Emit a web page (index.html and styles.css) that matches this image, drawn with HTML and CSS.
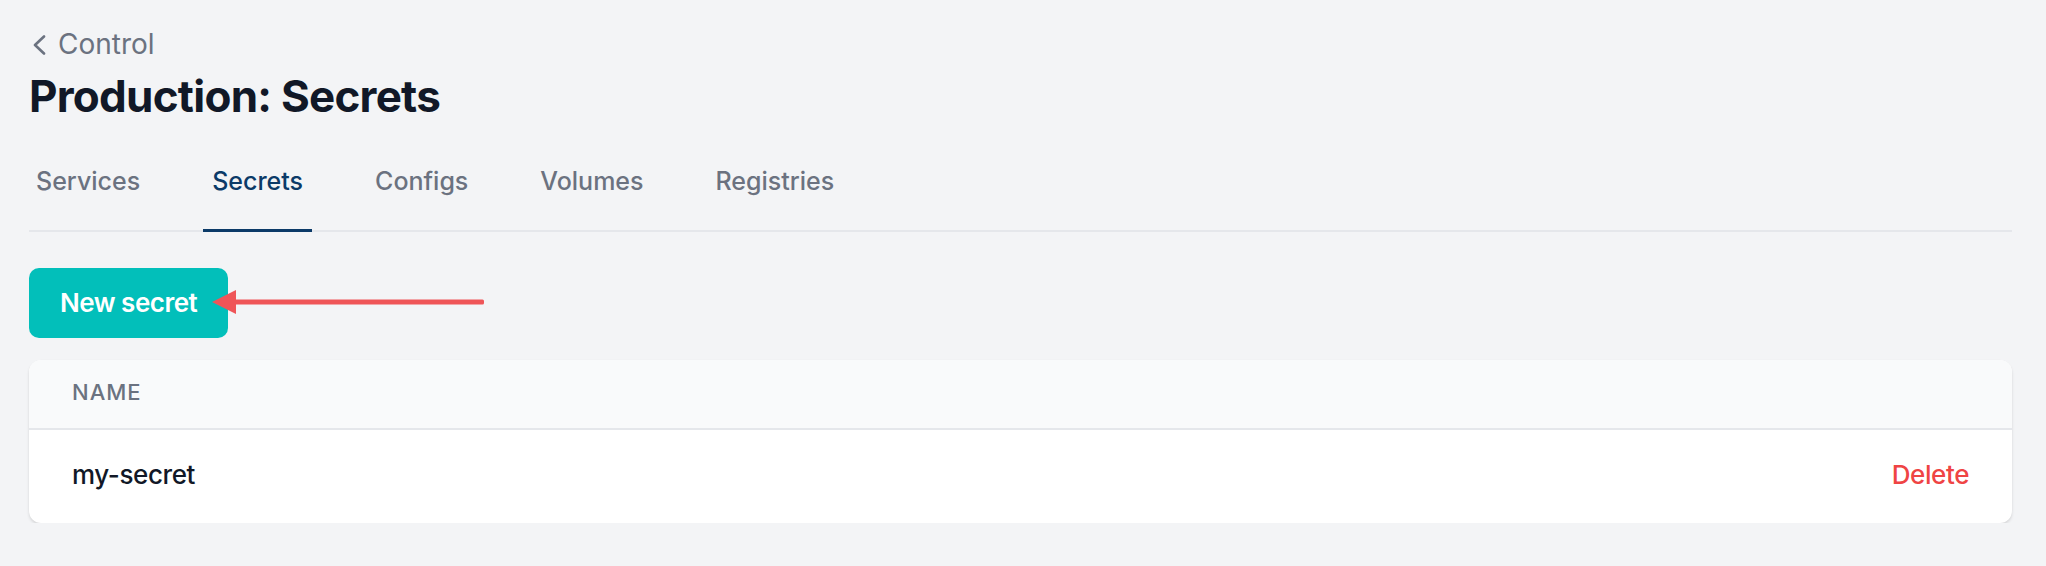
FILE: index.html
```html
<!DOCTYPE html>
<html lang="en">
<head>
<meta charset="utf-8">
<title>Production: Secrets</title>
<link rel="stylesheet" href="styles.css">
</head>
<body>
<main class="page">
  <a class="back" href="#">
    <svg class="back-icon" width="14" height="20" viewBox="0 0 14 20" aria-hidden="true">
      <polyline points="12,1.5 3,10 12,18.5" fill="none" stroke="#6b7280" stroke-width="2.6" stroke-linecap="round" stroke-linejoin="round"/>
    </svg>
    <span>Control</span>
  </a>
  <h1 class="title">Production: Secrets</h1>

  <nav class="tabs">
    <a class="tab" href="#">Services</a>
    <a class="tab active" href="#">Secrets</a>
    <a class="tab" href="#">Configs</a>
    <a class="tab" href="#">Volumes</a>
    <a class="tab" href="#">Registries</a>
  </nav>

  <div class="actions">
    <button class="btn-primary" type="button">New secret</button>
    <svg class="annotation-arrow" width="274" height="26" viewBox="0 0 274 26" aria-hidden="true">
      <rect x="22" y="10.5" width="250" height="5" rx="1.5" fill="#ef5558"/>
      <polygon points="0,13 24,1 24,25" fill="#ef5558"/>
    </svg>
  </div>

  <section class="card">
    <div class="card-head">Name</div>
    <div class="card-row">
      <span class="row-name">my-secret</span>
      <a class="row-delete" href="#">Delete</a>
    </div>
  </section>
</main>
</body>
</html>
```

FILE: styles.css
```css
* {
  box-sizing: border-box;
}

html, body {
  margin: 0;
  padding: 0;
  background: #f3f4f6;
}

body {
  font-family: "Inter", "Noto Sans", "Liberation Sans", sans-serif;
  color: #111827;
}

.page {
  padding: 24px 34px 0 29px;
}

.back {
  display: flex;
  align-items: center;
  gap: 12px;
  height: 40px;
  font-size: 28px;
  line-height: 40px;
  color: #6b7280;
  text-decoration: none;
  width: max-content;
}

.back-icon {
  margin-left: 3px;
  margin-top: 1px;
}

.title {
  margin: 6px 0 0 0;
  font-size: 44px;
  line-height: 52px;
  font-weight: 700;
  letter-spacing: -0.75px;
  color: #111827;
}

.tabs {
  display: flex;
  gap: 54px;
  margin-top: 43px;
  border-bottom: 2px solid #e5e7eb;
}

.tab {
  display: block;
  margin-bottom: -2px;
  padding: 0 9px 32px 9px;
  font-size: 25px;
  line-height: 32px;
  font-weight: 500;
  color: #6b7280;
  text-decoration: none;
  border-bottom: 3px solid transparent;
}

.tab:first-child {
  margin-left: -2px;
}

.tab.active {
  color: #0b3a68;
  border-bottom-color: #0b3a68;
}

.actions {
  position: relative;
  margin-top: 36px;
  display: flex;
}

.btn-primary {
  font-family: inherit;
  font-size: 26px;
  line-height: 30px;
  font-weight: 600;
  letter-spacing: -0.5px;
  color: #ffffff;
  background: #02bfba;
  border: none;
  border-radius: 10px;
  padding: 20px 31px;
  cursor: pointer;
}

.annotation-arrow {
  position: absolute;
  left: 183px;
  top: 21px;
}

.card {
  margin-top: 22px;
  background: #ffffff;
  border-radius: 12px;
  box-shadow: 0 2px 3px rgba(0, 0, 0, 0.12), 0 0 1px rgba(0, 0, 0, 0.04);
  overflow: hidden;
}

.card-head {
  background: #f9fafb;
  border-bottom: 2px solid #e5e7eb;
  padding: 18px 43px 22px 43px;
  font-size: 22px;
  line-height: 28px;
  font-weight: 500;
  letter-spacing: 1px;
  text-transform: uppercase;
  color: #6b7280;
}

.card-row {
  display: flex;
  justify-content: space-between;
  align-items: center;
  padding: 27px 43px 30px 43px;
  font-size: 26px;
  line-height: 36px;
  letter-spacing: -0.4px;
}

.row-name {
  font-weight: 500;
  color: #111827;
}

.row-delete {
  font-weight: 500;
  color: #ef4444;
  text-decoration: none;
}
```
